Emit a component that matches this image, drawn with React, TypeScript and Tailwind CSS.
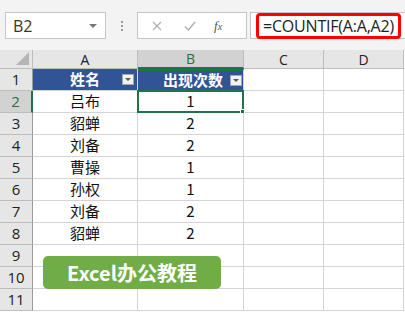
import React from "react";

const rows: [string, string][] = [
  ["吕布", "1"],
  ["貂蝉", "2"],
  ["刘备", "2"],
  ["曹操", "1"],
  ["孙权", "1"],
  ["刘备", "2"],
  ["貂蝉", "2"],
];

const cjk = { fontFamily: '"Noto Sans CJK SC", "Noto Sans", sans-serif' };
const ui = { fontFamily: '"Open Sans", "Noto Sans", sans-serif' };

function FilterButton() {
  return (
    <div className="w-[12px] h-[11px] bg-[#f2f2f2] border border-[#a6a6a6] flex items-center justify-center">
      <div className="w-0 h-0 border-l-[3px] border-r-[3px] border-t-[3px] border-l-transparent border-r-transparent border-t-[#595959]" />
    </div>
  );
}

export default function App() {
  const cols = ["A", "B", "C", "D"];
  return (
    <div className="w-[405px] h-[313px] overflow-hidden bg-white relative select-none" style={ui}>
      {/* formula bar */}
      <div className="h-[50px] bg-[#f3f3f3] flex items-center pt-[1px]">
        <div className="ml-[5px] w-[101px] h-[27px] bg-white border border-[#c6c6c6] flex items-center justify-between pl-[7px] pr-[8px]">
          <span className="text-[16px] text-[#333]">B2</span>
          <div className="w-0 h-0 border-l-[4px] border-r-[4px] border-t-[4px] border-l-transparent border-r-transparent border-t-[#777]" />
        </div>
        <div className="w-[31px] flex flex-col items-center gap-[2px]">
          <div className="w-[2px] h-[2px] bg-[#9a9a9a]" />
          <div className="w-[2px] h-[2px] bg-[#9a9a9a]" />
          <div className="w-[2px] h-[2px] bg-[#9a9a9a]" />
        </div>
        <div className="w-[110px] h-[27px] bg-white border border-[#c6c6c6] flex items-center">
          <svg width="14" height="14" viewBox="0 0 14 14" className="ml-[12px]">
            <path d="M3 3 L11 11 M11 3 L3 11" stroke="#b0b0b0" strokeWidth="1.3" />
          </svg>
          <svg width="14" height="14" viewBox="0 0 14 14" className="ml-[19px]">
            <path d="M2 7.5 L5.5 11 L12 3" stroke="#b0b0b0" strokeWidth="1.5" fill="none" />
          </svg>
          <span className="ml-[17px] text-[13px] italic text-[#555]" style={{ fontFamily: '"Liberation Serif", serif' }}>
            f<span className="text-[10px]">x</span>
          </span>
        </div>
        <div className="ml-[3px] flex-1 h-[27px] bg-white border-l border-y border-[#c6c6c6] flex items-center pl-[5px]">
          <div className="w-[145px] h-[26px] border-[3px] border-[#ff0000] rounded-[4px] flex items-center pl-[4px]">
            <span className="text-[16px] text-[#222] tracking-[-0.2px] leading-none">=COUNTIF(A:A,A2)</span>
          </div>
        </div>
      </div>

      {/* grid */}
      <div className="grid grid-cols-[33px_105px_106px_80px_80px] grid-rows-[19px_repeat(11,22px)]">
        <div className="bg-[#e6e6e6] border-r border-b border-[#bdbdbd] flex items-end justify-end pr-[3px] pb-[3px]">
          <svg width="13" height="13" viewBox="0 0 13 13">
            <path d="M13 0 L13 13 L0 13 Z" fill="#b5b5b5" />
          </svg>
        </div>
        {cols.map((c) => (
          <div
            key={c}
            className={
              c === "B"
                ? "bg-[#d2d2d2] border-r border-[#bdbdbd] border-b-2 border-b-[#217346] flex items-center justify-center text-[14px] text-[#217346]"
                : "bg-[#e6e6e6] border-r border-b border-[#bdbdbd] flex items-center justify-center text-[14px] text-[#222]"
            }
          >
            {c}
          </div>
        ))}

        {Array.from({ length: 11 }).map((_, i) => {
          const r = i + 1;
          const data = r >= 2 && r <= 8 ? rows[r - 2] : null;
          return (
            <React.Fragment key={r}>
              <div
                className={
                  r === 2
                    ? "bg-[#d2d2d2] border-r-2 border-r-[#217346] border-b border-b-[#bdbdbd] flex items-center justify-center text-[15px] text-[#217346]"
                    : "bg-[#e6e6e6] border-r border-r-[#9b9b9b] border-b border-b-[#bdbdbd] flex items-center justify-center text-[15px] text-[#222]"
                }
              >
                {r}
              </div>
              {r === 1 ? (
                <>
                  <div className="bg-[#305496] border-r border-b border-[#d4d4d4] flex items-center pl-[37px] pr-[3px]" style={cjk}>
                    <span className="text-[15px] font-bold text-white flex-1">姓名</span>
                    <FilterButton />
                  </div>
                  <div className="bg-[#305496] border-r border-b border-[#d4d4d4] flex items-center pl-[25px] pr-[1px] border-t-2 border-t-[#217346]" style={cjk}>
                    <span className="text-[15px] font-bold text-white flex-1">出现次数</span>
                    <FilterButton />
                  </div>
                </>
              ) : (
                <>
                  <div className="border-r border-b border-[#d4d4d4] flex items-center justify-center text-[15px] text-[#111]" style={cjk}>
                    {data ? data[0] : ""}
                  </div>
                  <div className="relative border-r border-b border-[#d4d4d4] flex items-center justify-center text-[15px] text-[#111]" style={cjk}>
                    {data ? data[1] : ""}
                    {r === 2 && (
                      <div className="absolute -left-[1px] -top-[1px] -right-[1px] -bottom-[1px] border-2 border-[#217346]">
                        <div className="absolute -right-[3px] -bottom-[3px] w-[5px] h-[5px] bg-[#217346] border border-white" />
                      </div>
                    )}
                  </div>
                </>
              )}
              <div className="border-r border-b border-[#d4d4d4]" />
              <div className="border-r border-b border-[#d4d4d4]" />
            </React.Fragment>
          );
        })}
      </div>

      {/* watermark badge */}
      <div
        className="absolute left-[43px] top-[256px] w-[178px] h-[33px] rounded-[5px] bg-[#70ad47] flex items-center justify-center text-white text-[20px] font-bold"
        style={cjk}
      >
        Excel办公教程
      </div>
    </div>
  );
}
